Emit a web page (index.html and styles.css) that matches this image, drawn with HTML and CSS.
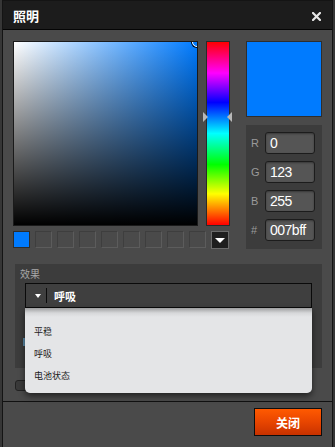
FILE: index.html
```html
<!DOCTYPE html>
<html lang="zh">
<head>
<meta charset="utf-8">
<link rel="stylesheet" href="styles.css">
</head>
<body>
<div class="dialog">
  <div class="titlebar">
    <span class="title">照明</span>
    <svg class="close" width="9" height="9" viewBox="0 0 9 9"><path d="M1 1L8 8M8 1L1 8" stroke="#e6e6e6" stroke-width="2.2" stroke-linecap="square"/></svg>
  </div>
  <div class="content">
    <div class="picker">
      <div class="left">
        <div class="maps">
          <div class="sat"><span class="cursor"></span></div>
          <div class="hue-wrap">
            <div class="hue"></div>
            <span class="arrow arrow-l"></span>
            <span class="arrow arrow-r"></span>
          </div>
        </div>
        <div class="swatches">
          <span class="sw sw-blue"></span>
          <span class="sw"></span>
          <span class="sw"></span>
          <span class="sw"></span>
          <span class="sw"></span>
          <span class="sw"></span>
          <span class="sw"></span>
          <span class="sw"></span>
          <span class="sw"></span>
          <span class="sw-btn"><span class="tri"></span></span>
        </div>
      </div>
      <div class="right">
        <div class="preview"></div>
        <div class="values">
          <div class="row"><span class="lbl">R</span><span class="inp">0</span></div>
          <div class="row"><span class="lbl">G</span><span class="inp">123</span></div>
          <div class="row"><span class="lbl">B</span><span class="inp">255</span></div>
          <div class="row"><span class="lbl">#</span><span class="inp">007bff</span></div>
        </div>
      </div>
    </div>
    <div class="effect">
      <div class="effect-label">效果</div>
      <div class="select">
        <span class="sel-arrow"></span>
        <span class="sel-div"></span>
        <span class="sel-text">呼吸</span>
        <div class="menu">
          <div class="item">平稳</div>
          <div class="item">呼吸</div>
          <div class="item">电池状态</div>
        </div>
      </div>
      <div class="hidden-row"><span class="gear"></span></div>
    </div>
    <div class="options"><span class="check"></span></div>
  </div>
  <div class="footer">
    <button class="btn">关闭</button>
  </div>
</div>
</body>
</html>
```

FILE: styles.css
```css
html, body {
  margin: 0;
  padding: 0;
}
body {
  width: 335px;
  height: 447px;
  overflow: hidden;
  background: #363636;
  font-family: "Liberation Sans", "Noto Sans CJK SC", sans-serif;
}
.dialog {
  margin-left: 2px;
  width: 331px;
  height: 447px;
  box-sizing: border-box;
  border: 1px solid #141414;
  border-bottom: none;
  background: #4a4a4a;
}
.titlebar {
  height: 28px;
  background: #1c1c1c;
  border-bottom: 1px solid #050505;
  display: flex;
  align-items: center;
  justify-content: space-between;
  padding: 0 11px 0 10px;
}
.title {
  color: #fff;
  font-family: "Noto Sans CJK SC", sans-serif;
  font-weight: bold;
  font-size: 13px;
  line-height: 14px;
  margin-top: 2px;
}
.close { display: block; margin-top: 3px; }
.content {
  padding: 11px 10px 0 10px;
}
.picker {
  display: flex;
  gap: 16px;
}
.left {
  width: 217px;
}
.maps {
  display: flex;
  gap: 8px;
  height: 185px;
}
.sat {
  position: relative;
  width: 185px;
  height: 185px;
  box-sizing: border-box;
  border: 1px solid #1a1a1a;
  overflow: hidden;
  background:
    linear-gradient(to top, #000 0%, rgba(0,0,0,0) 100%),
    linear-gradient(to right, #fff 0%, #007bff 100%);
}
.cursor {
  position: absolute;
  right: -5px;
  top: -5px;
  width: 8px;
  height: 8px;
  border-radius: 50%;
  border: 1px solid #fff;
  box-shadow: 0 0 0 1px #000;
}
.hue-wrap {
  position: relative;
  width: 24px;
  height: 185px;
}
.hue {
  height: 100%;
  box-sizing: border-box;
  border: 1px solid #2a2a2a;
  background: linear-gradient(to bottom, #f00 0%, #f0f 17%, #00f 33%, #0ff 50%, #0f0 67%, #ff0 83%, #f00 100%);
}
.arrow {
  position: absolute;
  top: 71px;
  width: 0;
  height: 0;
  border-top: 5px solid transparent;
  border-bottom: 5px solid transparent;
}
.arrow-l {
  left: -3px;
  border-left: 5px solid #b8b8b8;
}
.arrow-r {
  right: -2px;
  border-right: 5px solid #b8b8b8;
}
.swatches {
  display: flex;
  gap: 5px;
  margin-top: 5px;
  align-items: flex-start;
}
.sw {
  width: 17px;
  height: 17px;
  box-sizing: border-box;
  border: 1px solid #5c5c5c;
  border-top-color: #3e3e3e;
  border-left-color: #3e3e3e;
  background: #4a4a4a;
}
.sw-blue {
  background: #007bff;
  border-color: #2d2d2d;
}
.sw-btn {
  width: 18px;
  height: 18px;
  box-sizing: border-box;
  border: 1px solid #6a6a6a;
  background: #1e1e1e;
  display: flex;
  align-items: center;
  justify-content: center;
}
.tri {
  width: 0;
  height: 0;
  border-left: 5px solid transparent;
  border-right: 5px solid transparent;
  border-top: 5px solid #fff;
}
.right {
  width: 76px;
}
.preview {
  height: 76px;
  box-sizing: border-box;
  border: 1px solid #2e2e2e;
  background: #007bff;
}
.values {
  margin-top: 8px;
  height: 124px;
  box-sizing: border-box;
  background: #3c3c3c;
  padding: 7px 7px 0 5px;
  display: flex;
  flex-direction: column;
  gap: 7px;
}
.row {
  display: flex;
  align-items: center;
  height: 22px;
}
.lbl {
  width: 14px;
  color: #9a9a9a;
  font-size: 11px;
}
.inp {
  margin-left: auto;
  width: 50px;
  height: 22px;
  box-sizing: border-box;
  border: 1px solid #1c1c1c;
  border-radius: 3px;
  background: #555;
  box-shadow: inset 0 1px 2px rgba(0,0,0,0.35);
  color: #fff;
  font-size: 14px;
  line-height: 20px;
  padding-left: 4px;
  letter-spacing: -0.5px;
}
.effect {
  margin: 15px 0 0 2px;
  width: 307px;
  height: 104px;
  box-sizing: border-box;
  background: #3c3c3c;
  padding: 3px 10px 0 10px;
}
.effect-label {
  color: #a8a8a8;
  font-family: "Noto Sans CJK SC", sans-serif;
  font-size: 10px;
  line-height: 13px;
  margin-left: -5px;
}
.select {
  position: relative;
  margin-top: 3px;
  width: 287px;
  height: 25px;
  box-sizing: border-box;
  border: 1px solid #0a0a0a;
  background: #3f3f3f;
  display: flex;
  align-items: center;
}
.sel-arrow {
  margin-left: 9px;
  width: 0;
  height: 0;
  border-left: 3px solid transparent;
  border-right: 3px solid transparent;
  border-top: 4px solid #fff;
}
.sel-div {
  margin-left: 5px;
  width: 1px;
  height: 15px;
  background: #0a0a0a;
}
.sel-text {
  margin-left: 7px;
  color: #fff;
  font-family: "Noto Sans CJK SC", sans-serif;
  font-weight: bold;
  font-size: 11px;
}
.menu {
  position: absolute;
  top: 24px;
  left: -1px;
  width: 287px;
  height: 85px;
  box-sizing: border-box;
  background: linear-gradient(to bottom, #9d9e9f 0px, #d6d7d9 5px, #e4e5e7 9px);
  border-radius: 0 0 5px 5px;
  box-shadow: 0 3px 6px rgba(0,0,0,0.55);
  padding-top: 18px;
  z-index: 2;
}
.item {
  height: 22px;
  line-height: 12px;
  padding-left: 9px;
  color: #1c1c1c;
  font-family: "Noto Sans CJK SC", sans-serif;
  font-size: 9px;
}
.hidden-row {
  margin-top: 30px;
}
.gear {
  display: block;
  margin-left: -2px;
  width: 6px;
  height: 8px;
  background: #5a8aa8;
}
.options {
  height: 33px;
  display: flex;
  align-items: center;
  padding-left: 2px;
}
.check {
  margin-top: 2px;
  width: 14px;
  height: 11px;
  box-sizing: border-box;
  border: 1px solid #222;
  border-radius: 3px;
  background: #3a3a3a;
}
.footer {
  border-top: 1px solid #111;
  padding: 6px 10px 0 0;
  display: flex;
  justify-content: flex-end;
}
.btn {
  width: 68px;
  height: 28px;
  box-sizing: border-box;
  border: 1px solid #0d0d0d;
  background: linear-gradient(to bottom, #ff5a00 0%, #e84500 50%, #c83200 100%);
  color: #fff;
  font-family: "Noto Sans CJK SC", sans-serif;
  font-weight: bold;
  font-size: 12px;
  padding: 0;
}
```
